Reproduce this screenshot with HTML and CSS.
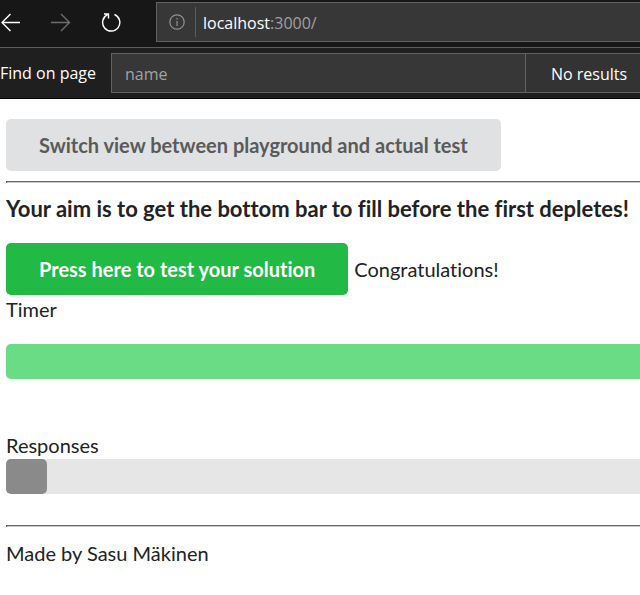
FILE: index.html
```html
<!DOCTYPE html>
<html lang="en">
<head>
<meta charset="utf-8">
<title>localhost:3000</title>
<link rel="stylesheet" href="styles.css">
</head>
<body>
<header class="browser">
  <nav class="toolbar" aria-label="Browser">
    <button class="nav-button" type="button" aria-label="Back">
      <svg width="20" height="20" viewBox="0 0 20 20"><path d="M19 10.500H1.500M9.500 2L1 10.500L9.500 19"/></svg>
    </button>
    <button class="nav-button forward" type="button" aria-label="Forward">
      <svg width="20" height="20" viewBox="0 0 20 20"><path d="M0 10.500H18.500M10 2L18.500 10.500L10 19"/></svg>
    </button>
    <button class="nav-button" type="button" aria-label="Refresh">
      <svg width="20" height="20" viewBox="0 0 20 20"><path d="M13.500 2.500A8.600 8.600 0 1 1 6.500 2.700M3 2H7.500V6.500"/></svg>
    </button>
    <div class="address">
      <svg class="info" width="16" height="16" viewBox="0 0 16 16"><circle cx="8" cy="8" r="7.200"/><path d="M8 7V12M8 4V5.500"/></svg>
      <div class="url"><span class="host">localhost</span>:3000/</div>
    </div>
  </nav>
  <div class="find">
    <label class="find-label" for="find">Find on page</label>
    <div class="find-box">
      <input class="find-input" id="find" type="text" value="name">
      <output class="find-result" for="find">No results</output>
    </div>
  </div>
</header>
<main class="page">
  <button class="button" type="button">Switch view between playground and actual test</button>
  <hr class="divider">
  <h3 class="heading">Your aim is to get the bottom bar to fill before the first depletes!</h3>
  <div class="action">
    <button class="button positive" type="button">Press here to test your solution</button>
    <span>Congratulations!</span>
  </div>
  <div id="timer">Timer</div>
  <div class="progress timer" role="progressbar" aria-labelledby="timer"><div class="bar full"></div></div>
  <div id="responses">Responses</div>
  <div class="progress" role="progressbar" aria-labelledby="responses"><div class="bar"></div></div>
  <hr class="divider">
  <footer>Made by Sasu Mäkinen</footer>
</main>
</body>
</html>
```
FILE: styles.css
```css
* {
  box-sizing: border-box;
}

body {
  margin: 0;
  background: #fff;
  color: #212223;
  font: 20px/28px Lato, sans-serif;
  font-variant-ligatures: none;
  overflow-x: hidden;
}

button,
input {
  font: inherit;
  font-variant-ligatures: none;
}

.browser {
  background: #1f1f1f;
  border-bottom: 1px solid #000;
  color: #fff;
  font: 16px/24px "Open Sans", "Noto Sans", sans-serif;
}

.toolbar {
  display: flex;
  align-items: flex-start;
  height: 48px;
  padding: 2px 0 0 1px;
  background: #171717;
  border-bottom: 1px solid #5c5c5c;
}

.nav-button {
  display: flex;
  align-items: center;
  width: 50px;
  height: 40px;
  padding: 0;
  border: 0;
  background: none;
  color: #fff;
}

.nav-button svg,
.info {
  fill: none;
  stroke: currentColor;
  stroke-width: 1.4;
}

.forward {
  color: #6e6e6e;
}

.address {
  display: flex;
  flex: 1;
  align-items: center;
  height: 40px;
  margin-left: 5px;
  padding-left: 12px;
  background: #373737;
  border: 1px solid #626262;
  border-right: 0;
}

.info {
  color: #929292;
  stroke-width: 1.2;
}

.url {
  margin-left: 10px;
  padding: 4px 0 2px 7px;
  border-left: 1px solid #5c5c5c;
  color: #a0a0a0;
}

.host {
  color: #fff;
}

.find {
  display: flex;
  align-items: center;
  height: 50px;
}

.find-label {
  width: 111px;
  white-space: nowrap;
}

.find-box {
  display: flex;
  flex: 1;
  min-width: 0;
  height: 40px;
  background: #373737;
  border: 1px solid #626262;
  border-right: 0;
}

.find-input {
  flex: 1;
  min-width: 0;
  padding: 2px 13px 0;
  border: 0;
  background: none;
  color: #a3a3a3;
}

.find-result {
  width: 115px;
  padding: 8px 0 0 25px;
  background: #333;
  border-left: 1px solid #626262;
  white-space: nowrap;
}

.page {
  padding: 20px 0 0 6px;
}

.button {
  display: block;
  height: 52px;
  padding: 0 33px;
  border: 0;
  border-radius: 5px;
  background: #e0e1e2;
  color: #5a5a5a;
  font-weight: 700;
}

.positive {
  background: #21ba45;
  color: #fff;
}

.divider {
  height: 2px;
  margin: 10px 0 12px;
  border: 0;
  border-top: 1px solid #696969;
  border-left: 1px solid #696969;
  background: #c8c8c8;
}

.heading {
  margin: 0 0 20px;
  font-size: 22px;
  font-weight: 700;
  line-height: 28px;
  white-space: nowrap;
}

.action {
  display: flex;
  align-items: center;
  gap: 6px;
}

.progress {
  height: 35px;
  margin-bottom: 31px;
  border-radius: 5px 0 0 5px;
  background: #e6e6e6;
}

.timer {
  margin: 21px 0 52px;
}

.bar {
  width: 41px;
  height: 100%;
  border-radius: 5px;
  background: #8a8a8a;
}

.full {
  width: 100%;
  border-radius: 5px 0 0 5px;
  background: #6bdc86;
}
```
